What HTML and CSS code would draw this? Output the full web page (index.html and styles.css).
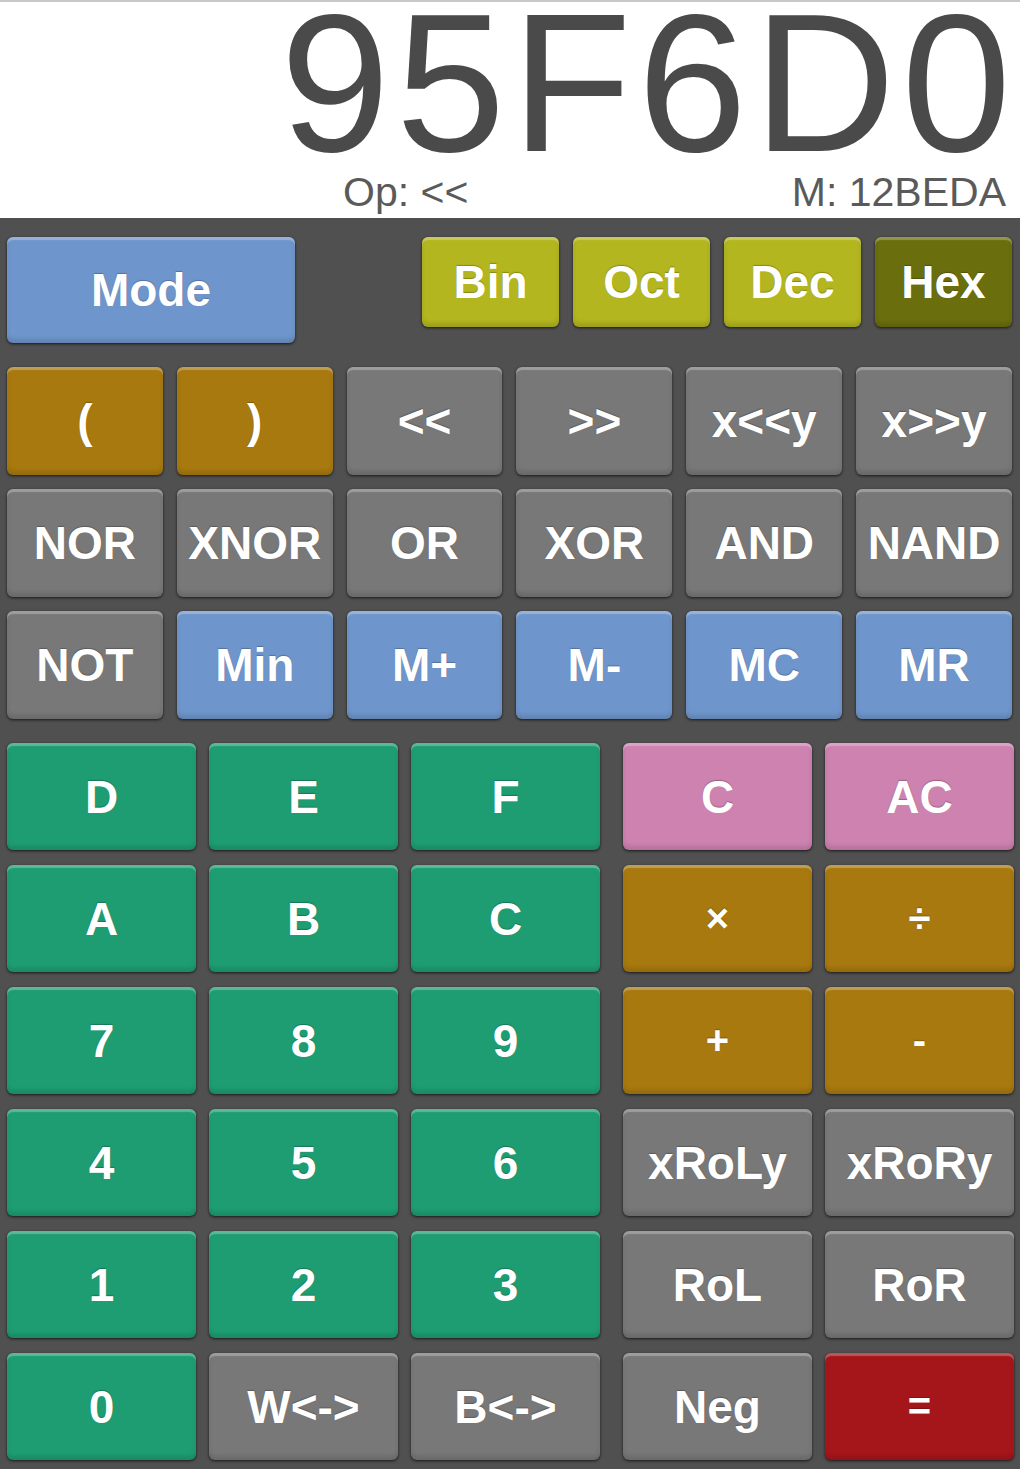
FILE: index.html
```html
<!DOCTYPE html>
<html>

<head>
    <title>Programmer Calculator</title>
    <link rel="stylesheet" href="styles.css">
</head>

<body>
    <div class="display">
        <div class="value">95F6D0</div>
        <div class="status">
            <span class="op">Op: &lt;&lt;</span>
            <span class="mem">M: 12BEDA</span>
        </div>
    </div>

    <div class="pad">
        <div class="top-row">
            <div class="btn blue mode">Mode</div>
            <div class="bases">
                <div class="btn lime">Bin</div>
                <div class="btn lime">Oct</div>
                <div class="btn lime">Dec</div>
                <div class="btn olive">Hex</div>
            </div>
        </div>

        <div class="func-grid">
            <div class="btn brown">(</div>
            <div class="btn brown">)</div>
            <div class="btn gray">&lt;&lt;</div>
            <div class="btn gray">&gt;&gt;</div>
            <div class="btn gray">x&lt;&lt;y</div>
            <div class="btn gray">x&gt;&gt;y</div>

            <div class="btn gray">NOR</div>
            <div class="btn gray">XNOR</div>
            <div class="btn gray">OR</div>
            <div class="btn gray">XOR</div>
            <div class="btn gray">AND</div>
            <div class="btn gray">NAND</div>

            <div class="btn gray">NOT</div>
            <div class="btn blue">Min</div>
            <div class="btn blue">M+</div>
            <div class="btn blue">M-</div>
            <div class="btn blue">MC</div>
            <div class="btn blue">MR</div>
        </div>

        <div class="keypad">
            <div class="digits">
                <div class="btn green">D</div>
                <div class="btn green">E</div>
                <div class="btn green">F</div>
                <div class="btn green">A</div>
                <div class="btn green">B</div>
                <div class="btn green">C</div>
                <div class="btn green">7</div>
                <div class="btn green">8</div>
                <div class="btn green">9</div>
                <div class="btn green">4</div>
                <div class="btn green">5</div>
                <div class="btn green">6</div>
                <div class="btn green">1</div>
                <div class="btn green">2</div>
                <div class="btn green">3</div>
                <div class="btn green">0</div>
                <div class="btn gray">W&lt;-&gt;</div>
                <div class="btn gray">B&lt;-&gt;</div>
            </div>

            <div class="ops">
                <div class="btn pink">C</div>
                <div class="btn pink">AC</div>
                <div class="btn brown small">&times;</div>
                <div class="btn brown small">&divide;</div>
                <div class="btn brown small">+</div>
                <div class="btn brown small">-</div>
                <div class="btn gray">xRoLy</div>
                <div class="btn gray">xRoRy</div>
                <div class="btn gray">RoL</div>
                <div class="btn gray">RoR</div>
                <div class="btn gray">Neg</div>
                <div class="btn red small">=</div>
            </div>
        </div>
    </div>
</body>

</html>
```

FILE: styles.css
```css
body {
    margin: 0;
    font-family: "Liberation Sans", Arial, sans-serif;
    background-color: #505050;
}

.display {
    height: 218px;
    box-sizing: border-box;
    background-color: #ffffff;
    border-top: 2px solid #c8c8c8;
    padding-top: 1px;
}

.value {
    font-size: 197px;
    line-height: 160px;
    color: #4a4a4a;
    text-align: right;
    padding-right: 3px;
    letter-spacing: 6px;
}

.status {
    display: flex;
    justify-content: space-between;
    margin-top: 6px;
    padding-left: 343px;
    padding-right: 14px;
    font-size: 41px;
    line-height: 46px;
    color: #5a5a5a;
}

.pad {
    padding: 19px 7px 8px 7px;
}

.top-row {
    display: flex;
    justify-content: space-between;
    align-items: flex-start;
    margin-right: 1px;
    margin-bottom: 24px;
}

.mode {
    width: 288px;
    height: 106px;
}

.bases {
    display: flex;
    gap: 14px;
}

.bases .btn {
    width: 137px;
    height: 90px;
}

.func-grid {
    display: grid;
    grid-template-columns: repeat(6, 1fr);
    grid-auto-rows: 108px;
    column-gap: 14px;
    row-gap: 14px;
    margin-right: 1px;
    margin-bottom: 24px;
}

.keypad {
    display: flex;
    gap: 23px;
}

.digits,
.ops {
    display: grid;
    grid-auto-rows: 107px;
    column-gap: 13px;
    row-gap: 15px;
}

.digits {
    grid-template-columns: repeat(3, 189px);
}

.ops {
    grid-template-columns: repeat(2, 189px);
}

.btn {
    display: flex;
    align-items: center;
    justify-content: center;
    border-radius: 6px;
    color: #ffffff;
    font-size: 46px;
    font-weight: bold;
    white-space: nowrap;
    text-shadow: 0 -1px 1px rgba(0, 0, 0, 0.25);
    box-shadow: 0 1px 3px rgba(0, 0, 0, 0.7),
        inset 0 3px 1px rgba(255, 255, 255, 0.28),
        inset 0 -4px 4px rgba(0, 0, 0, 0.12);
}

.small {
    font-size: 40px;
}

.gray {
    background-color: #787878;
}

.blue {
    background-color: #6f96cc;
}

.lime {
    background-color: #b3b61f;
}

.olive {
    background-color: #6b6e0d;
}

.brown {
    background-color: #a8790f;
}

.green {
    background-color: #1e9d73;
}

.pink {
    background-color: #cd82b0;
}

.red {
    background-color: #a5161a;
}
```
